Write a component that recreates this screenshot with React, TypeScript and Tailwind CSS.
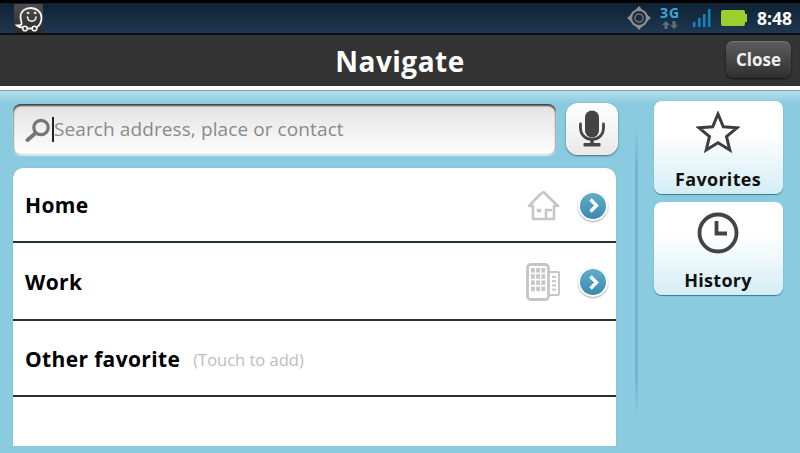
import React from "react";

const font = { fontFamily: '"Open Sans", "Noto Sans", sans-serif' };

function Waze() {
  return (
    <svg width="29" height="29" viewBox="0 0 29 29" fill="none" stroke="#f2f2f2" strokeLinecap="round">
      <path d="M7.500 20.500C8 18.500 6.500 16 6.500 13C6.500 7.500 11 4 16.500 4C23 4 27.500 8.500 27.500 13.500C27.500 18 25.500 21.500 22.500 23.500M18 24.500H13.500M8.500 23.500C6.500 23.500 4.500 23 3 21.500C4.500 21.500 6.500 21.500 7.500 20.500" strokeWidth="1.800" />
      <circle cx="11" cy="24.500" r="2.300" strokeWidth="1.600" />
      <circle cx="20.500" cy="24.500" r="2.300" strokeWidth="1.600" />
      <circle cx="14" cy="9" r="0.900" fill="#f2f2f2" strokeWidth="0.800" />
      <circle cx="21" cy="9" r="0.900" fill="#f2f2f2" strokeWidth="0.800" />
      <path d="M13.500 13C14 18.500 21.500 18.500 22 13" strokeWidth="1.600" />
    </svg>
  );
}

function Gps() {
  return (
    <svg width="24" height="24" viewBox="0 0 24 24" fill="none">
      <path d="M12 0L15.500 4H8.500ZM12 24L15.500 20H8.500ZM0 12L4 8.500V15.500ZM24 12L20 8.500V15.500Z" fill="#8d8d8d" />
      <circle cx="12" cy="12" r="8" stroke="#8d8d8d" strokeWidth="2.200" />
      <circle cx="12" cy="12" r="4" stroke="#6a7076" strokeWidth="1.600" />
    </svg>
  );
}

function Net() {
  return (
    <div className="flex w-[22px] flex-col items-center">
      <span className="text-[14px] leading-[11px] font-bold tracking-[1px] text-[#39a8dc]" style={font}>3G</span>
      <svg width="16" height="8" viewBox="0 0 16 8" className="mt-[3px]" fill="#5f6e7a">
        <path d="M4 0L8 4H5.500V8H2.500V4H0ZM12 8L8 4H10.500V0H13.500V4H16Z" />
      </svg>
    </div>
  );
}

function Signal() {
  return (
    <svg width="18" height="18" viewBox="0 0 18 18" fill="#0d84c4">
      <rect x="0" y="13" width="2.500" height="5" />
      <rect x="5" y="9" width="2.500" height="9" />
      <rect x="10" y="5" width="2.500" height="13" />
      <rect x="15" y="0" width="2.500" height="18" />
    </svg>
  );
}

function Battery() {
  return (
    <div className="flex items-center">
      <div className="h-[16px] w-[24px] rounded-[2px] bg-[#9bcf2e]" />
      <div className="h-[8px] w-[2px] bg-[#9bcf2e]" />
    </div>
  );
}

function Mic() {
  return (
    <svg width="28" height="38" viewBox="0 0 28 38" fill="none">
      <rect x="7" y="0.500" width="14" height="27" rx="7" fill="#444" />
      <path d="M2.500 14V17.500C2.500 25 7.500 29.500 14 29.500C20.500 29.500 25.500 25 25.500 17.500V14" stroke="#444" strokeWidth="2.800" strokeLinecap="round" />
      <path d="M14 29V34" stroke="#444" strokeWidth="3.500" />
      <rect x="5.500" y="33" width="17" height="3.500" rx="1" fill="#444" />
    </svg>
  );
}

function Search() {
  return (
    <svg width="26" height="24" viewBox="0 0 26 24" fill="none">
      <circle cx="16" cy="9.500" r="7.200" stroke="#757575" strokeWidth="3.200" />
      <path d="M10 15.500L2.500 22" stroke="#757575" strokeWidth="3.800" strokeLinecap="round" />
    </svg>
  );
}

function House() {
  return (
    <svg width="33" height="31" viewBox="0 0 33 31" fill="none" stroke="#c6c6c6" strokeWidth="2.600" strokeLinejoin="round">
      <path d="M2 16L13 4.500L16.500 2L31 16L27 16V29H6V16Z" />
      <rect x="10" y="19" width="4" height="3" fill="#c6c6c6" strokeWidth="0.500" />
      <path d="M19 29V20H25" />
    </svg>
  );
}

function Building() {
  const cells = Array.from({ length: 12 });
  return (
    <svg width="34" height="38" viewBox="0 0 34 38" fill="none">
      <rect x="1.500" y="1.500" width="21" height="35" rx="3" stroke="#c6c6c6" strokeWidth="2.800" />
      <path d="M23 9H31.500A1.500 1.500 0 0 1 33 10.500V30.500A1.500 1.500 0 0 1 31.500 32H23" stroke="#c6c6c6" strokeWidth="2" />
      {cells.map((_, i) => (
        <rect key={i} x={5 + (i % 3) * 5.2} y={5 + Math.floor(i / 3) * 6.200} width="3.800" height="4.600" fill="#c6c6c6" />
      ))}
      {[0, 1, 2, 3].map((i) => (
        <rect key={i} x="26" y={13 + i * 4.200} width="4" height="2" fill="#c6c6c6" />
      ))}
    </svg>
  );
}

function Arrow() {
  return (
    <div className="flex h-[30px] w-[30px] items-center justify-center rounded-full bg-white shadow-[0_1px_2px_rgba(0,0,0,0.35)]">
      <div className="flex h-[26px] w-[26px] items-center justify-center rounded-full bg-[linear-gradient(#62acc9,#3a8bb0)]">
        <svg width="15" height="17" viewBox="0 0 15 17" fill="none">
          <path d="M4.500 2.500L10.500 8.500L4.500 14.500" stroke="white" strokeWidth="3.400" />
        </svg>
      </div>
    </div>
  );
}

function Star() {
  return (
    <svg width="44" height="42" viewBox="0 0 44 42" fill="none">
      <path d="M22 3L27.300 15.800L41 16.800L30.500 25.600L33.800 39L22 31.800L10.200 39L13.500 25.600L3 16.800L16.700 15.800Z" stroke="#3d3d3d" strokeWidth="3" strokeLinejoin="miter" />
    </svg>
  );
}

function Clock() {
  return (
    <svg width="42" height="42" viewBox="0 0 42 42" fill="none">
      <circle cx="21" cy="21" r="18.500" stroke="#444" strokeWidth="3.800" />
      <path d="M19.500 9V21.500H30" stroke="#444" strokeWidth="3.800" />
    </svg>
  );
}

function Row({ label, hint, icon, h }: { label: string; hint?: string; icon?: React.ReactNode; h: string }) {
  return (
    <div className={`flex items-center border-b-2 border-[#26323a] pl-[12px] pr-[8px] pt-[2px] ${h}`}>
      <span className="text-[21px] leading-none font-bold tracking-[0.35px] text-black">{label}</span>
      {hint && <span className="ml-[13px] pt-[2px] text-[16.5px] text-[#bdbdbd]">{hint}</span>}
      {icon && (
        <div className="ml-auto flex items-center">
          <div className="flex w-[40px] justify-center">{icon}</div>
          <div className="ml-[15px]"><Arrow /></div>
        </div>
      )}
    </div>
  );
}

function SideButton({ label, icon }: { label: string; icon: React.ReactNode }) {
  return (
    <div className="flex h-[93px] w-[129px] flex-col items-center rounded-[8px] bg-[linear-gradient(#ffffff_0%,#ffffff_35%,#d4edf5_100%)] shadow-[0_1px_1px_rgba(30,100,130,0.8)]">
      <div className="flex h-[65px] items-start justify-center pt-[10px]">{icon}</div>
      <span className="text-[18px] leading-[26px] font-bold tracking-[0.3px] text-[#111]">{label}</span>
    </div>
  );
}

export default function App() {
  return (
    <div className="flex h-[453px] w-[800px] flex-col overflow-hidden bg-[#8bcbe0]" style={font}>
      <div className="flex h-[35px] items-center border-t-[3px] border-b-2 border-t-black border-b-[#0b0f14] bg-[linear-gradient(#0e2233,#1f3750)] pr-[8px] pl-[14px]">
        <div className="flex h-[29px] w-[29px] items-center justify-center rounded-[2px] bg-[linear-gradient(#4d4d4d,#2b2b2b)]">
          <Waze />
        </div>
        <div className="ml-auto flex items-center">
          <Gps />
          <div className="ml-[8px]"><Net /></div>
          <div className="ml-[12px]"><Signal /></div>
          <div className="ml-[10px]"><Battery /></div>
          <span className="ml-[10px] text-[17.5px] font-bold text-white">8:48</span>
        </div>
      </div>
      <div className="relative flex h-[51px] items-center justify-center bg-[#333333]">
        <span className="text-[28px] leading-none font-bold tracking-[0.5px] text-white">Navigate</span>
        <div className="absolute top-[6px] right-[9px] flex h-[37px] w-[65px] items-center justify-center rounded-[7px] border-t border-t-[#777] bg-[linear-gradient(#5c5c5c,#2f2f2f)] text-[17px] font-bold text-[#f0f0f0] shadow-[0_1px_2px_rgba(0,0,0,0.7)]">
          Close
        </div>
      </div>
      <div className="h-[4px] bg-white" />
      <div className="h-px bg-[#8a9ea6]" />
      <div className="flex flex-1 bg-[linear-gradient(#b4dfec,#8bcbe0_12px)]">
        <div className="ml-[13px] flex w-[605px] flex-col pt-[12px]">
          <div className="flex h-[52px] items-start gap-[10px]">
            <div className="mt-px flex h-[51px] w-[543px] items-center rounded-[8px] bg-[linear-gradient(#e2e2e2,#ffffff)] pl-[12px] shadow-[inset_0_2px_2px_rgba(40,40,40,0.85),inset_0_0_2px_rgba(60,60,60,0.6),0_1px_1px_rgba(255,255,255,0.6)]">
              <Search />
              <div className="ml-[1px] h-[25px] w-[2px] bg-[#222]" />
              <span className="text-[19px] tracking-[0.1px] text-[#8a8a8a]">Search address, place or contact</span>
            </div>
            <div className="flex h-[52px] w-[52px] items-center justify-center rounded-[12px] bg-[linear-gradient(#ffffff,#e9e9e9)] shadow-[0_1px_2px_rgba(30,70,90,0.7)]">
              <Mic />
            </div>
          </div>
          <div className="mt-[13px] flex h-[278px] w-[603px] flex-col rounded-t-[10px] bg-white shadow-[0_0_1px_rgba(80,90,160,0.6)]">
            <Row label="Home" h="h-[75px]" icon={<House />} />
            <Row label="Work" h="h-[78px]" icon={<Building />} />
            <Row label="Other favorite" hint="(Touch to add)" h="h-[76px]" />
          </div>
        </div>
        <div className="mt-[34px] ml-[17px] h-[295px] w-[3px] bg-[linear-gradient(to_bottom,#8bcbe0,#72b6cf_15%,#72b6cf_85%,#8bcbe0)]" />
        <div className="ml-[15.500px] flex flex-col gap-[8px] pt-[10px]">
          <SideButton label="Favorites" icon={<Star />} />
          <SideButton label="History" icon={<Clock />} />
        </div>
      </div>
    </div>
  );
}
